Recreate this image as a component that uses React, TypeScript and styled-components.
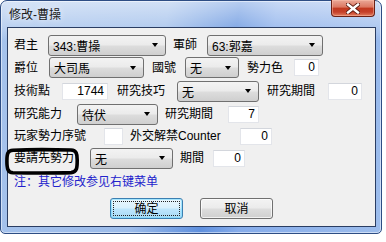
import React from 'react';
import styled, { createGlobalStyle } from 'styled-components';

const Global = createGlobalStyle`
  html, body { margin: 0; padding: 0; background: #ffffff; }
  body {
    font-family: "Liberation Sans", "Noto Sans CJK TC", sans-serif;
    font-size: 12px;
    color: #000;
  }
`;

const Window = styled.div`
  position: relative;
  box-sizing: border-box;
  width: 382px;
  height: 234px;
  border: 1px solid #2d4d84;
  border-radius: 7px 7px 5px 5px;
  padding: 0 5px 6px 6px;
  display: flex;
  flex-direction: column;
  background:
    linear-gradient(to bottom, rgba(255,255,255,0.55) 0px, rgba(255,255,255,0.25) 26px, rgba(255,255,255,0) 40px),
    linear-gradient(100deg, #a6c3ec 0%, #9cbcea 40%, #5f90de 57%, #86acea 66%, #9dbdec 100%);
  box-shadow: inset 0 0 0 1px rgba(255,255,255,0.5);
`;

const TitleBar = styled.div`
  height: 26px;
  display: flex;
  justify-content: space-between;
  align-items: flex-start;
  flex: none;
`;

const TitleText = styled.div`
  margin: 6px 0 0 2px;
  line-height: 16px;
  font-size: 12px;
  color: #1a1a1a;
  text-shadow: 0 0 6px rgba(255,255,255,0.9);
`;

const CloseButton = styled.div`
  box-sizing: border-box;
  width: 44px;
  height: 17px;
  margin: -1px 1px 0 0;
  border: 1px solid #6a2116;
  border-top: none;
  border-radius: 0 0 4px 4px;
  background: linear-gradient(#eaa897 0%, #dc7761 45%, #c2391f 50%, #c5402a 75%, #e27d5f 100%);
  box-shadow: inset 0 0 0 1px rgba(255,200,180,0.45);
  display: flex;
  align-items: center;
  justify-content: center;
`;

const Client = styled.div`
  position: relative;
  flex: 1;
  border: 1px solid #2a3d62;
  background: #f0f0f0;
  padding: 6px 0 0 6px;
  display: flex;
  flex-direction: column;
`;

const Form = styled.div`
  display: grid;
  grid-template-rows: 22px 23px 24px 22px 22px 22px;
`;

const Row = styled.div`
  display: flex;
  align-items: center;
`;

const Label = styled.span<{ $w: number }>`
  flex: none;
  width: ${p => p.$w}px;
  white-space: nowrap;
  line-height: 16px;
`;

const Combo = styled.div<{ $w: number; $mr?: number }>`
  flex: none;
  box-sizing: border-box;
  width: ${p => p.$w}px;
  height: 21px;
  margin-right: ${p => p.$mr ?? 7}px;
  border: 1px solid #707070;
  border-radius: 3px;
  background: linear-gradient(#f3f3f3 0%, #ebebeb 48%, #dddddd 52%, #cfcfcf 100%);
  display: flex;
  align-items: center;
  justify-content: space-between;
  padding: 0 7px 0 4px;
  white-space: nowrap;
`;

const Arrow = styled.span`
  width: 0;
  height: 0;
  border-left: 3.5px solid transparent;
  border-right: 3.5px solid transparent;
  border-top: 4px solid #000;
`;

const TextBox = styled.div<{ $w: number; $mr?: number }>`
  flex: none;
  box-sizing: border-box;
  width: ${p => p.$w}px;
  height: 17px;
  margin-right: ${p => p.$mr ?? 7}px;
  background: #fff;
  border: 1px solid #e3e5ea;
  border-top-color: #d3d6dc;
  text-align: right;
  padding-right: 3px;
  line-height: 15px;
`;

const Note = styled.div`
  margin-top: 5px;
  line-height: 16px;
  color: #2222cc;
  font-family: "Liberation Sans", "Noto Sans CJK SC", sans-serif;
`;

const Buttons = styled.div`
  margin-top: 8px;
  display: flex;
  justify-content: center;
  gap: 17px;
  padding-right: 6px;
`;

const Button = styled.div<{ $focused?: boolean }>`
  position: relative;
  box-sizing: border-box;
  width: 73px;
  height: 21px;
  border-radius: 3px;
  border: 1px solid ${p => (p.$focused ? '#3c7fb1' : '#707070')};
  background: ${p =>
    p.$focused
      ? 'linear-gradient(#eaf6fd 0%, #d9f0fc 48%, #bee6fd 52%, #a7d9f5 100%)'
      : 'linear-gradient(#f3f3f3 0%, #ebebeb 48%, #dddddd 52%, #cfcfcf 100%)'};
  box-shadow: inset 0 0 0 1px ${p => (p.$focused ? 'rgba(120,220,255,0.6)' : 'rgba(255,255,255,0.7)')};
  display: flex;
  align-items: center;
  justify-content: center;
  font-family: "Liberation Sans", "Noto Sans CJK SC", sans-serif;
  line-height: 16px;
`;

const FocusRect = styled.span`
  position: absolute;
  inset: 2px;
  border: 1px dotted #222;
  border-radius: 1px;
`;

const Annotation = styled.svg`
  position: absolute;
  left: -3px;
  top: 120px;
  overflow: visible;
  pointer-events: none;
`;

export default function App() {
  return (
    <>
      <Global />
      <Window>
        <TitleBar>
          <TitleText>修改-曹操</TitleText>
          <CloseButton>
            <svg width="14" height="11" viewBox="0 0 14 11">
              <path d="M2 1.5 L12 9.5 M12 1.5 L2 9.5" stroke="#5a1a10" strokeWidth="4.2" strokeLinecap="square" />
              <path d="M2 1.5 L12 9.5 M12 1.5 L2 9.5" stroke="#ffffff" strokeWidth="2.4" strokeLinecap="square" />
            </svg>
          </CloseButton>
        </TitleBar>
        <Client>
          <Form>
            <Row>
              <Label $w={34}>君主</Label>
              <Combo $w={118}>343:曹操<Arrow /></Combo>
              <Label $w={34}>軍師</Label>
              <Combo $w={116}>63:郭嘉<Arrow /></Combo>
            </Row>
            <Row>
              <Label $w={35}>爵位</Label>
              <Combo $w={95} $mr={8}>大司馬<Arrow /></Combo>
              <Label $w={33}>國號</Label>
              <Combo $w={54} $mr={8}>无<Arrow /></Combo>
              <Label $w={47}>勢力色</Label>
              <TextBox $w={25}>0</TextBox>
            </Row>
            <Row>
              <Label $w={48}>技術點</Label>
              <TextBox $w={46} $mr={9}>1744</TextBox>
              <Label $w={60}>研究技巧</Label>
              <Combo $w={82} $mr={8}>无<Arrow /></Combo>
              <Label $w={61}>研究期間</Label>
              <TextBox $w={34}>0</TextBox>
            </Row>
            <Row>
              <Label $w={63}>研究能力</Label>
              <Combo $w={81}>待伏<Arrow /></Combo>
              <Label $w={63}>研究期間</Label>
              <TextBox $w={31}>7</TextBox>
            </Row>
            <Row>
              <Label $w={90}>玩家勢力序號</Label>
              <TextBox $w={19}></TextBox>
              <Label $w={110}>外交解禁Counter</Label>
              <TextBox $w={32}>0</TextBox>
            </Row>
            <Row>
              <Label $w={76}>要請先勢力</Label>
              <Combo $w={83}>无<Arrow /></Combo>
              <Label $w={33}>期間</Label>
              <TextBox $w={32}>0</TextBox>
            </Row>
          </Form>
          <Note>注：其它修改参见右键菜单</Note>
          <Buttons>
            <Button $focused>
              <FocusRect />
              确定
            </Button>
            <Button>取消</Button>
          </Buttons>
          <Annotation width="74" height="27" viewBox="0 0 74 27">
            <path
              d="M8 2.2 C 25 1.4, 50 1.6, 66 2.0 C 71.5 2.3, 72.2 6, 72.2 12 C 72.2 19, 72.4 24.2, 66 24.6 C 48 25.2, 26 25.0, 8 24.8 C 2.6 24.6, 1.9 20, 1.9 13 C 1.9 6, 2.6 2.4, 8 2.2 Z"
              fill="none"
              stroke="#000"
              strokeWidth="3.6"
              strokeLinejoin="round"
            />
          </Annotation>
        </Client>
      </Window>
    </>
  );
}
